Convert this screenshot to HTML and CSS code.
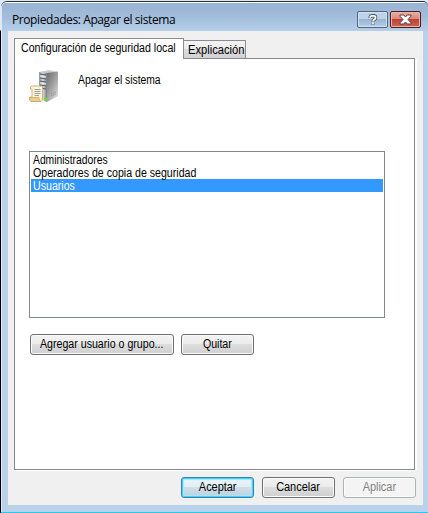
FILE: index.html
```html
<!DOCTYPE html>
<html lang="es">
<head>
<meta charset="utf-8">
<title>Propiedades: Apagar el sistema</title>
<link rel="stylesheet" href="styles.css">
</head>
<body>
<div class="window">
  <header class="titlebar">
    <h1 class="title">Propiedades: Apagar el sistema</h1>
    <div class="controls">
      <button class="control help" aria-label="Ayuda">
        <svg width="10" height="12" viewBox="0 0 10 12"><path d="M2.2 4V2.8Q2.5 1.8 4 1.8H5.8Q7.6 1.8 7.6 3.6Q7.6 5 6.2 5.6Q5 6.2 5 7.4M5 9.2V10.6" fill="none" stroke="#4d5665" stroke-width="3.4"/><path d="M2.2 3.8V2.8Q2.5 1.8 4 1.8H5.8Q7.6 1.8 7.6 3.6Q7.6 5 6.2 5.6Q5 6.2 5 7.2M5 8.6V10.3" fill="none" stroke="#fff" stroke-width="1.7"/></svg>
      </button>
      <button class="control close" aria-label="Cerrar">
        <svg width="13" height="11" viewBox="0 0 13 11"><path d="M1 1H4.8L6.5 3L8.2 1H12V2.2L9 5.5L12 8.8V10H8.2L6.5 8L4.8 10H1V8.8L4 5.5L1 2.2Z" fill="#fff" stroke="#5a4148"/></svg>
      </button>
    </div>
  </header>
  <main class="client">
    <div class="tabs">
      <div class="tab active"><span class="t-config">Configuración de seguridad local</span></div>
      <div class="tab"><span class="t-expl">Explicación</span></div>
    </div>
    <section class="panel">
      <div class="policy">
        <svg class="server" width="32" height="34" viewBox="0 0 32 34">
          <defs>
            <linearGradient id="front" x2="1" y2="0"><stop stop-color="#8d9296"/><stop offset=".5" stop-color="#d3d8da"/><stop offset="1" stop-color="#777d81"/></linearGradient>
            <linearGradient id="side" x2=".8" y2="1"><stop stop-color="#6b6b6b"/><stop offset=".6" stop-color="#aaa"/><stop offset="1" stop-color="#ddd"/></linearGradient>
          </defs>
          <path d="M10 3L20 1L29 3L18 5Z" fill="#c9cccd"/>
          <path d="M18 4L29 2.500V27L18 33Z" fill="url(#side)"/>
          <path d="M10 3L18 4V33L10 30Z" fill="url(#front)"/>
          <path d="M11 5L17 6M11 9L17 10M11 12L17 13M11 16L17 17M11 19L17 20" stroke="#596065" stroke-width="1.2"/>
          <path d="M11 7L17 8M11 14L17 15" stroke="#eef1f2"/>
          <path d="M22 25L27 23M22 27L27 25" stroke="#888" stroke-dasharray="1 1"/>
          <path d="M15 28.500L18 29V32L15 31Z" fill="#62e51e"/>
          <path d="M3 17Q1 17 1.500 20H3V28H1Q0 32 2.500 32.500H12Q14 32 13.500 28V17Z" fill="#fff4cf" stroke="#c9aa6b" stroke-width=".8"/>
          <path d="M.5 28.500H10Q10 32 12 32.500H2Q.5 32 .5 28.500Z" fill="#e8ce91" stroke="#c3a15e" stroke-width=".7"/>
          <path d="M5.500 20.500H11.500M5.500 22.500H11.500M5.500 24.500H11.500M5.500 26.500H10" stroke="#8c93b2" stroke-width=".9"/>
        </svg>
        <span class="t-policy">Apagar el sistema</span>
      </div>
      <ul class="list">
        <li><span class="t-admin">Administradores</span></li>
        <li><span class="t-oper">Operadores de copia de seguridad</span></li>
        <li class="selected"><span class="t-users">Usuarios</span></li>
      </ul>
      <div class="actions">
        <button class="btn wide"><span class="t-add">Agregar usuario o grupo...</span></button>
        <button class="btn"><span class="t-remove">Quitar</span></button>
      </div>
    </section>
    <footer class="footer">
      <button class="btn default"><span class="t-ok">Aceptar</span></button>
      <button class="btn"><span class="t-cancel">Cancelar</span></button>
      <button class="btn" disabled><span class="t-apply">Aplicar</span></button>
    </footer>
  </main>
</div>
</body>
</html>
```
FILE: styles.css
```css
* { box-sizing: border-box; }
body {
  margin: 0;
  width: 428px;
  height: 513px;
  overflow: hidden;
  background: linear-gradient(#e0e8f7 0 30px, #000 31px);
  font: 12px/13px "Liberation Sans", Arial, sans-serif;
  color: #000;
}
.window {
  height: 512px;
  margin: 1px 0 0 1px;
  padding: 0 5px 6px 7px;
  border-top: 1px solid #252d35;
  border-bottom: 1px solid #20cce8;
  border-radius: 6px 5px 0 0;
  background: linear-gradient(#fff 0 1px, #98b4d2 1px, #a2bddb 15px, #b9d1ea 31px);
  box-shadow: inset 1px 0 #dceafa;
}
.titlebar { height: 29px; display: flex; justify-content: space-between; }
.title {
  margin: 9px 0 0 4px;
  font: 12px/18px "Open Sans", "Noto Sans", sans-serif;
  letter-spacing: -.41px;
  white-space: nowrap;
}
.controls { display: flex; gap: 2px; padding: 9px 2px 0 0; }
.control {
  width: 31px;
  height: 17px;
  padding: 0;
  display: flex;
  align-items: center;
  justify-content: center;
  border: 1px solid #52657e;
  border-radius: 2px;
  background: linear-gradient(#bfd3e8 0 50%, #9ab5d2 50%, #b5cee7);
  box-shadow: inset 0 0 0 1px #d2e2f2;
}
.close {
  border-color: #4e1a24;
  background: linear-gradient(#e9ada2, #d98777 48%, #bd432f 50%, #cc6650);
  box-shadow: inset 0 0 0 1px #e9b4aa;
}
.client { height: 474px; padding: 7px 6px 0; background: #f0f0f0; }
.tabs { height: 20px; display: flex; align-items: flex-end; }
.tab {
  height: 18px;
  width: 62px;
  padding: 3px 0 0 4px;
  border: 1px solid #898c95;
  border-left: 0;
  border-bottom: 0;
  background: linear-gradient(#f3f3f3, #ebebeb 50%, #dddddd 50%, #d2d2d2);
}
.tab.active {
  width: 170px;
  height: 21px;
  margin-bottom: -1px;
  padding: 3px 0 0 6px;
  border-left: 1px solid #898c95;
  background: #fff;
  position: relative;
}
.panel {
  width: 401px;
  height: 412px;
  padding: 10px 14px;
  border: 1px solid #868993;
  background: #fff;
  box-shadow: 2px 1px #fff;
}
.policy { height: 82px; display: flex; gap: 17px; align-items: flex-start; }
.policy span { margin-top: 5px; }
.list {
  width: 356px;
  height: 167px;
  margin: 0;
  padding: 1px;
  list-style: none;
  border: 1px solid #828790;
}
.list li { height: 13px; padding: 1px 0 0 2px; }
.list .selected { background: #3399ff; color: #fff; }
.actions { display: flex; gap: 7px; margin-top: 16px; padding-left: 1px; }
.btn {
  width: 73px;
  height: 21px;
  padding: 0;
  display: flex;
  align-items: center;
  justify-content: center;
  border: 1px solid #707070;
  border-radius: 3px;
  background: linear-gradient(#f3f3f3, #ebebeb 50%, #dddddd 50%, #cfcfcf);
  box-shadow: inset 0 0 0 1px #fafafa;
  font: inherit;
  color: #000;
}
.wide { width: 144px; }
.footer { display: flex; gap: 8px; padding: 7px 0 0 167px; }
.default {
  border-color: #3c7fb1;
  background: linear-gradient(#eef5f9, #e1eef4 50%, #cfdfe8 50%, #bed0da);
  box-shadow: inset 0 0 0 1px #42d4fa, inset 0 0 1px 2px #a3e7fa;
}
.btn:disabled { border-color: #adb2b5; background: #f4f4f4; color: #838383; }
span {
  display: block;
  width: max-content;
  flex-shrink: 0;
  white-space: nowrap;
  transform: scaleX(.885);
  transform-origin: left;
}
.btn span { transform-origin: center; }
.t-admin, .t-policy { transform: scaleX(.86); }
.t-oper { transform: scaleX(.884); }
.t-expl { transform: scaleX(.93); }
.t-ok, .t-cancel, .t-apply { transform: scaleX(.91); }
```
